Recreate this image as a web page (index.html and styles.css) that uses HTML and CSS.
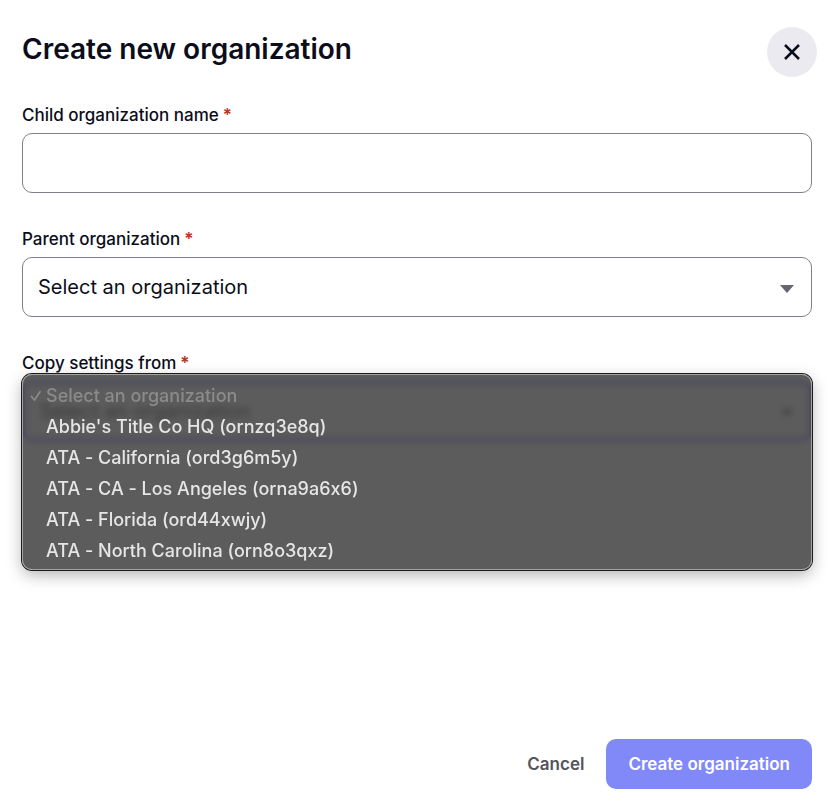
FILE: index.html
```
<!DOCTYPE html>
<html lang="en">
<head>
  <meta charset="UTF-8">
  <meta name="viewport" content="width=device-width, initial-scale=1.0">
  <title>Create new organization</title>
  <link rel="stylesheet" href="styles.css">
</head>
<body>
  <div class="dialog" role="dialog" aria-labelledby="dialog-title">
    <header class="dialog-header">
      <h1 id="dialog-title" class="dialog-title">Create new organization</h1>
      <button type="button" class="close-button" aria-label="Close">
        <svg class="close-icon" viewBox="0 0 18 18" fill="none" stroke="currentColor" stroke-width="2.5">
          <path d="M2 2l14 14M16 2L2 16"></path>
        </svg>
      </button>
    </header>

    <form class="dialog-form">
      <div class="field">
        <label class="field-label" for="child-name">Child organization name<span class="required">*</span></label>
        <input type="text" id="child-name" class="control" required>
      </div>

      <div class="field">
        <label class="field-label" for="parent-org">Parent organization<span class="required">*</span></label>
        <div class="select-wrap">
          <select id="parent-org" class="control" required>
            <option>Select an organization</option>
          </select>
          <svg class="caret" viewBox="0 0 14 8" fill="currentColor"><path d="M0 0h14L7 8z"></path></svg>
        </div>
      </div>

      <div class="field">
        <label class="field-label" for="copy-from">Copy settings from<span class="required">*</span></label>
        <div class="select-wrap">
          <select id="copy-from" class="control focused" required>
            <option>Select an organization</option>
          </select>
          <svg class="caret" viewBox="0 0 14 8" fill="currentColor"><path d="M0 0h14L7 8z"></path></svg>

          <!-- Open menu -->
          <div class="menu" role="listbox" aria-label="Copy settings from">
            <button type="button" class="menu-item" role="option" aria-selected="true" disabled>
              <svg class="check" viewBox="0 0 12 12" fill="none" stroke="currentColor" stroke-width="1.7" stroke-linecap="round" stroke-linejoin="round">
                <path d="M1.5 6.5L4.5 10L10 1.8"></path>
              </svg>
              <span>Select an organization</span>
            </button>
            <button type="button" class="menu-item" role="option">Abbie's Title Co HQ (ornzq3e8q)</button>
            <button type="button" class="menu-item" role="option">ATA - California (ord3g6m5y)</button>
            <button type="button" class="menu-item" role="option">ATA - CA - Los Angeles (orna9a6x6)</button>
            <button type="button" class="menu-item" role="option">ATA - Florida (ord44xwjy)</button>
            <button type="button" class="menu-item" role="option">ATA - North Carolina (orn8o3qxz)</button>
          </div>
        </div>
      </div>

      <footer class="dialog-footer">
        <button type="button" class="button button-text">Cancel</button>
        <button type="submit" class="button button-primary">Create organization</button>
      </footer>
    </form>
  </div>
</body>
</html>
```
FILE: styles.css
```
* {
  box-sizing: border-box;
}

body {
  margin: 0;
  background-color: #fff;
  color: #0c0d1a;
  font-family: Inter, "Liberation Sans", sans-serif;
}

button,
input,
select {
  font-family: inherit;
}

.dialog {
  display: flex;
  flex-direction: column;
  min-height: 100vh;
}

.dialog-header {
  display: flex;
  align-items: flex-start;
  justify-content: space-between;
  padding: 27px 17px 0 22px;
}

.dialog-title {
  margin: 0;
  font-size: 28px;
  font-weight: 600;
  line-height: 44px;
}

.close-button {
  display: flex;
  align-items: center;
  justify-content: center;
  width: 50px;
  height: 50px;
  padding: 0;
  border: none;
  border-radius: 50%;
  background-color: #ebeaf0;
  color: #0c0d1a;
  cursor: pointer;
}

.close-icon {
  width: 18px;
  height: 18px;
}

.dialog-form {
  flex: 1;
  display: flex;
  flex-direction: column;
  gap: 34px;
  padding: 26px 22px 9px;
}

.field {
  display: flex;
  flex-direction: column;
  gap: 6px;
}

.field-label {
  font-size: 17px;
  font-weight: 500;
  line-height: 24px;
}

.required {
  margin-left: 4px;
  color: #b83220;
  font-weight: 600;
}

.select-wrap {
  position: relative;
}

.control {
  display: block;
  width: 100%;
  height: 60px;
  padding: 0 15px;
  border: 1px solid #807f89;
  border-radius: 10px;
  background-color: #fff;
  color: #0c0d1a;
  font-size: 20px;
  appearance: none;
}

.control.focused {
  border: 3px solid #5558ff;
}

.caret {
  position: absolute;
  top: 28px;
  right: 18px;
  width: 14px;
  height: 8px;
  color: #66656d;
  pointer-events: none;
}

.menu {
  position: absolute;
  top: -7px;
  left: 0;
  right: 0;
  padding: 5px 0 3px;
  border: 1px solid #a2a2a2;
  border-radius: 10px;
  background-color: rgba(65, 65, 65, 0.86);
  backdrop-filter: blur(3px);
  box-shadow: 0 0 0 1px #1c1c1c, 0 5px 16px rgba(0, 0, 0, 0.3);
}

.menu-item {
  display: flex;
  align-items: center;
  width: 100%;
  height: 31px;
  padding: 0 23px;
  border: none;
  background: none;
  color: #e6e6e6;
  font-size: 18px;
  font-weight: 500;
  font-variant-ligatures: no-contextual;
  text-align: left;
}

.menu-item:disabled {
  padding-left: 7px;
  gap: 4px;
  color: #8b8b8b;
}

.check {
  width: 12px;
  height: 12px;
}

.dialog-footer {
  display: flex;
  justify-content: flex-end;
  margin-top: auto;
}

.button {
  height: 50px;
  padding: 0 22px;
  border: none;
  border-radius: 10px;
  background: none;
  font-size: 17px;
  font-weight: 600;
  cursor: pointer;
}

.button-text {
  color: #55545c;
}

.button-primary {
  background-color: #8189f9;
  color: #fff;
}
```
